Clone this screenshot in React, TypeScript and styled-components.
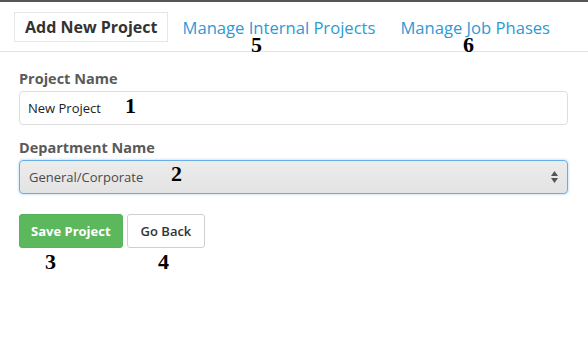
import React from "react";
import styled, { createGlobalStyle } from "styled-components";

const Global = createGlobalStyle`
  html, body { margin: 0; padding: 0; background: #fff; }
  body { font-family: "Open Sans", "Liberation Sans", sans-serif; }
  * { box-sizing: border-box; }
`;

const Page = styled.div`
  position: relative;
  width: 588px;
  height: 347px;
  border-top: 2px solid #555;
  overflow: hidden;
`;

const TabBar = styled.div`
  display: flex;
  align-items: flex-start;
  height: 50px;
  padding: 10px 0 0 14px;
  border-bottom: 1px solid #e3e3e3;
`;

const Tab = styled.div<{ $active?: boolean }>`
  height: 30px;
  display: flex;
  align-items: center;
  padding: 0 10px;
  margin-right: 3px;
  font-size: ${(p) => (p.$active ? 16 : 16.6)}px;
  border: 1px solid ${(p) => (p.$active ? "#e6e6e6" : "transparent")};
  color: ${(p) => (p.$active ? "#333" : "#2d9ad5")};
  font-weight: ${(p) => (p.$active ? 700 : 400)};
`;

const Form = styled.div`
  padding: 16px 20px 0 19px;
  display: flex;
  flex-direction: column;
`;

const Label = styled.div`
  font-size: 14.5px;
  font-weight: 700;
  color: #5a5a5a;
  height: 23px;
  line-height: 22px;
`;

const Field = styled.div<{ $select?: boolean }>`
  height: 34px;
  display: flex;
  align-items: center;
  justify-content: space-between;
  padding: 0 8px 0 ${(p) => (p.$select ? 9 : 8)}px;
  border-radius: 4px;
  font-size: 13px;
  margin-bottom: ${(p) => (p.$select ? 20 : 12)}px;
  color: ${(p) => (p.$select ? "#4a4a4a" : "#222")};
  border: 1px solid ${(p) => (p.$select ? "#68aee8" : "#dedede")};
  background: ${(p) => (p.$select ? "linear-gradient(#ececec, #e3e3e3)" : "#fff")};
  box-shadow: ${(p) => (p.$select ? "0 0 3px rgba(102,175,233,0.6)" : "none")};
`;

const Buttons = styled.div`
  display: flex;
  gap: 4px;
`;

const Button = styled.div<{ $primary?: boolean }>`
  height: 34px;
  display: flex;
  align-items: center;
  justify-content: center;
  padding: 0 ${(p) => (p.$primary ? 11 : 13)}px;
  border-radius: 3px;
  font-size: 13px;
  font-weight: ${(p) => (p.$primary ? 700 : 600)};
  color: ${(p) => (p.$primary ? "#fff" : "#333")};
  background: ${(p) => (p.$primary ? "#5cb85c" : "#fff")};
  border: 1px solid ${(p) => (p.$primary ? "#57b357" : "#cfcfcf")};
`;

const Marker = styled.div`
  position: absolute;
  font-family: "Liberation Serif", "Times New Roman", serif;
  font-weight: 700;
  font-size: 22px;
  color: #000;
  line-height: 1;
`;

const Arrows = () => (
  <svg width="9" height="14" viewBox="0 0 9 14">
    <path d="M4.5 1 L8 6 L1 6 Z" fill="#555" />
    <path d="M4.5 13 L8 8 L1 8 Z" fill="#555" />
  </svg>
);

export default function App() {
  return (
    <>
      <Global />
      <Page>
        <TabBar>
          <Tab $active>Add New Project</Tab>
          <Tab>Manage Internal Projects</Tab>
          <Tab>Manage Job Phases</Tab>
        </TabBar>
        <Form>
          <Label>Project Name</Label>
          <Field>New Project</Field>
          <Label>Department Name</Label>
          <Field $select>
            <span>General/Corporate</span>
            <Arrows />
          </Field>
          <Buttons>
            <Button $primary>Save Project</Button>
            <Button>Go Back</Button>
          </Buttons>
        </Form>
        <Marker style={{ left: 125, top: 93 }}>1</Marker>
        <Marker style={{ left: 171, top: 161 }}>2</Marker>
        <Marker style={{ left: 45, top: 249 }}>3</Marker>
        <Marker style={{ left: 158, top: 249 }}>4</Marker>
        <Marker style={{ left: 251, top: 32 }}>5</Marker>
        <Marker style={{ left: 463, top: 32 }}>6</Marker>
      </Page>
    </>
  );
}
